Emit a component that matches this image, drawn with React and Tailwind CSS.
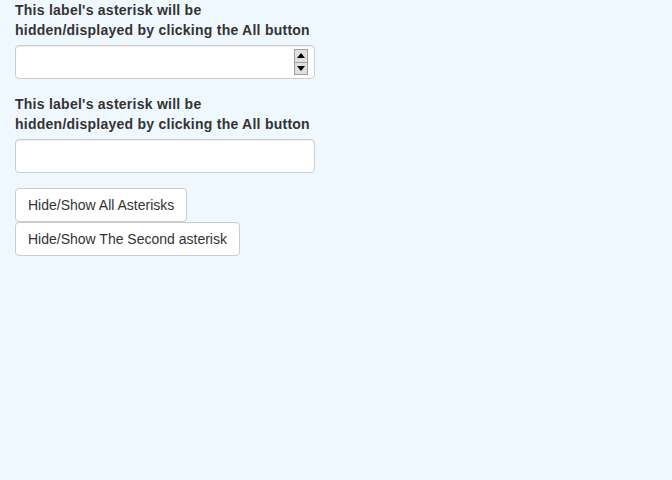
export default function App() {
  return (
    <div
      className="min-h-[480px] w-full bg-[#f0f8ff] px-[15px] text-[14px] leading-[20px] text-[#333]"
      style={{ fontFamily: '"Liberation Sans", Arial, sans-serif' }}
    >
      <div className="w-[300px]">
        <div className="mb-[15px]">
          <label className="mb-[5px] block font-bold tracking-[0.25px]">
            This label's asterisk will be hidden/displayed by clicking the All button
          </label>
          <div className="relative h-[34px] w-full rounded-[4px] border border-[#ccc] bg-white shadow-[inset_0_1px_1px_rgba(0,0,0,0.075)]">
            <div className="absolute right-[6px] top-[3px] flex h-[26px] w-[14px] flex-col border border-[#a0a0a0] bg-[#e0e0e0]">
              <div className="flex flex-1 items-center justify-center border-b border-[#a0a0a0]">
                <svg width="8" height="5" viewBox="0 0 8 5">
                  <path d="M0 5 L4 0 L8 5 Z" fill="#000" />
                </svg>
              </div>
              <div className="flex flex-1 items-center justify-center">
                <svg width="8" height="5" viewBox="0 0 8 5">
                  <path d="M0 0 L8 0 L4 5 Z" fill="#000" />
                </svg>
              </div>
            </div>
          </div>
        </div>
        <div className="mb-[15px]">
          <label className="mb-[5px] block font-bold tracking-[0.25px]">
            This label's asterisk will be hidden/displayed by clicking the All button
          </label>
          <div className="h-[34px] w-full rounded-[4px] border border-[#ccc] bg-white shadow-[inset_0_1px_1px_rgba(0,0,0,0.075)]" />
        </div>
      </div>
      <div className="flex flex-col items-start">
        <button className="h-[34px] rounded-[4px] border border-[#ccc] bg-white px-[12px] text-[14px] text-[#333]">
          Hide/Show All Asterisks
        </button>
        <button className="h-[34px] rounded-[4px] border border-[#ccc] bg-white px-[12px] text-[14px] text-[#333]">
          Hide/Show The Second asterisk
        </button>
      </div>
    </div>
  );
}
